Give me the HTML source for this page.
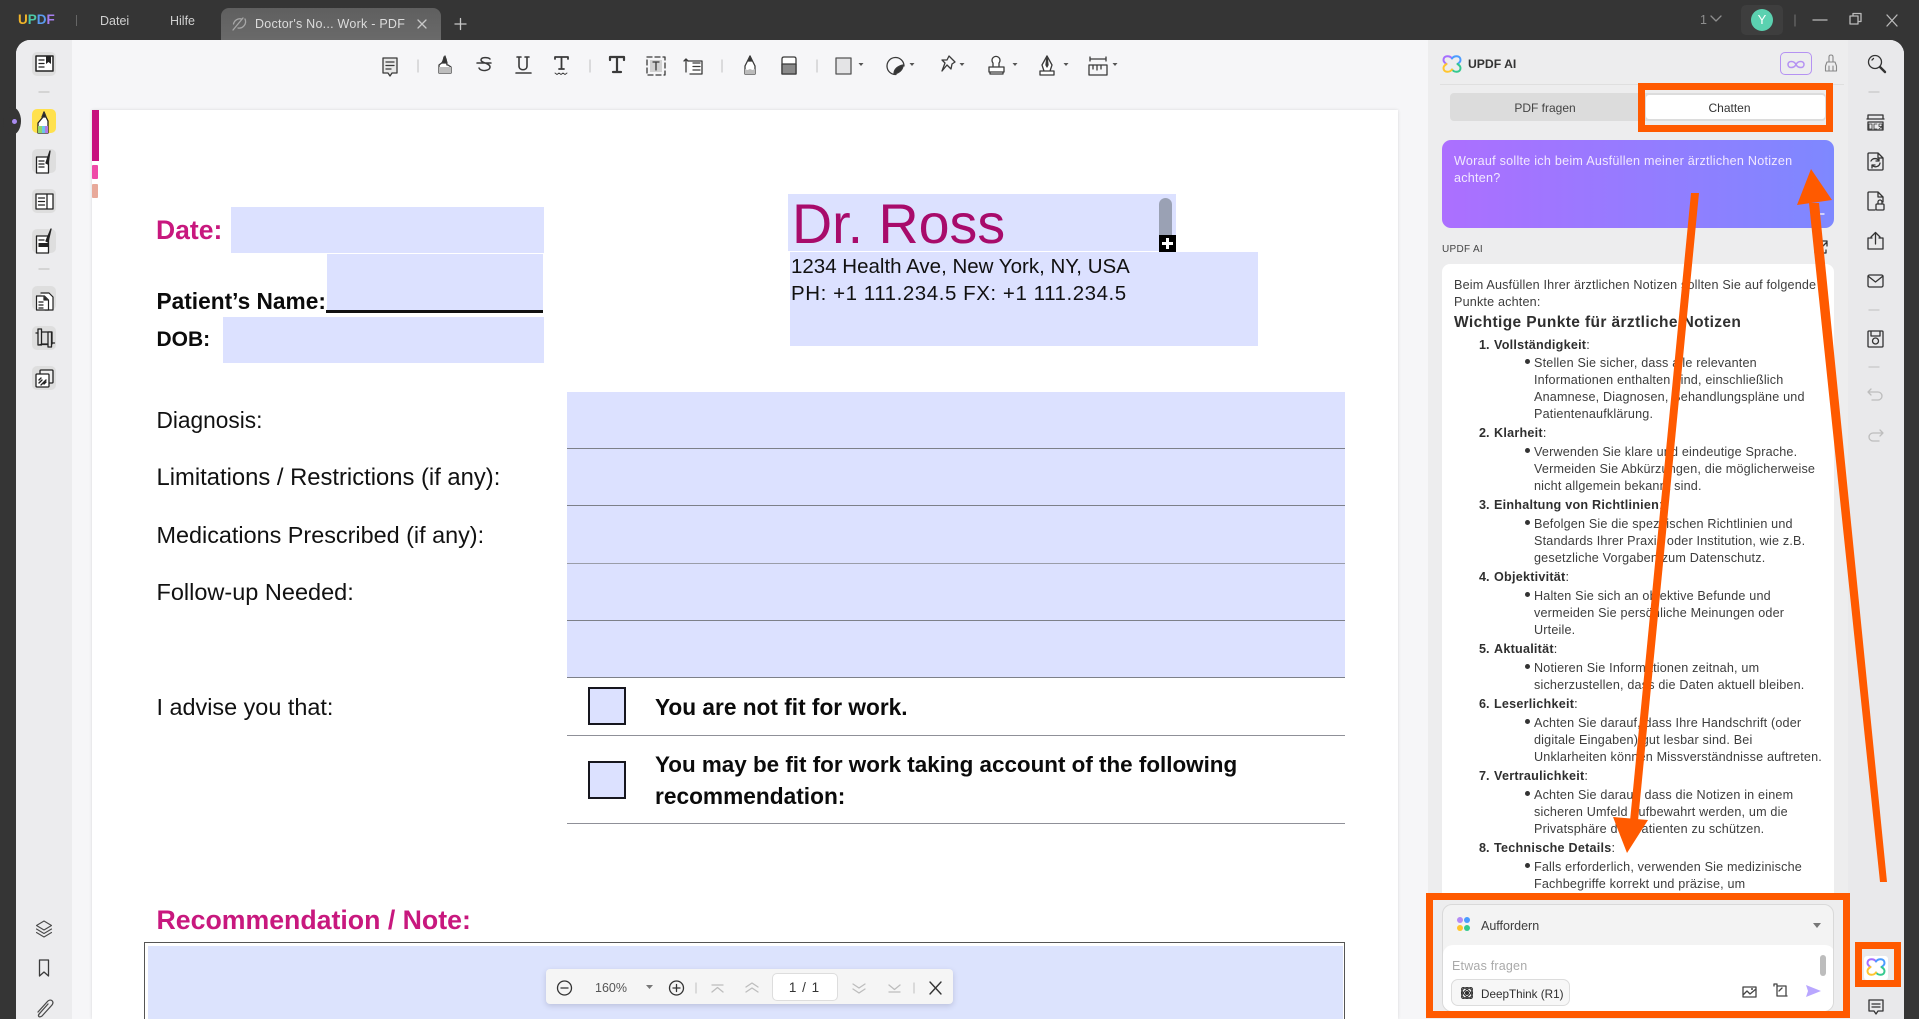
<!DOCTYPE html>
<html lang="de"><head><meta charset="utf-8"><title>UPDF</title>
<style>
html,body{margin:0;padding:0;width:1919px;height:1019px;overflow:hidden;background:#353535;font-family:"Liberation Sans",sans-serif}
div{position:absolute;box-sizing:border-box}
.t{position:absolute;white-space:nowrap;height:18px;line-height:18px}
.f{background:#dce1ff}
.l{position:absolute;left:567px;width:778px;height:1px;background:#7d8089}
.p{font-size:23.5px;color:#111;height:30px;line-height:30px;left:156.500px}
.b{font-size:22.5px;font-weight:bold;color:#0b0b0b;height:30px;line-height:30px}
.a{font-size:12.6px;color:#3d3d3d;letter-spacing:.18px;margin-top:1px}
.h{font-size:12.6px;color:#2f2f2f;font-weight:bold;letter-spacing:.24px;margin-top:1px}
.h span.n{display:inline-block;width:15px;letter-spacing:0}
.d{position:absolute;left:1525px;width:5px;height:5px;border-radius:50%;background:#333;margin-top:1px}
svg{position:absolute;left:0;top:0}
</style></head><body>

<!-- main panel -->
<div style="left:16px;top:40px;width:1888px;height:979px;background:#f6f6f8;border-radius:14px 14px 0 0;overflow:hidden">
 <div style="left:0;top:0;width:56px;height:979px;background:#ececee"></div>
 <div style="left:1412px;top:0;width:420px;height:979px;background:#ededee"></div>
 <div style="left:1832px;top:0;width:56px;height:979px;background:#e9e9eb"></div>
</div>

<!-- handle -->
<div style="left:3px;top:107px;width:18px;height:28px;border-radius:50%;background:#353535"></div>
<div style="left:12px;top:119px;width:5px;height:5px;border-radius:50%;background:#a98bf0"></div>

<!-- page -->
<div style="left:92px;top:110px;width:1306px;height:909px;background:#fff;box-shadow:0 0 3px rgba(0,0,0,.12)"></div>
<div style="left:92px;top:110px;width:7px;height:51px;background:#c8107e"></div>
<div style="left:92px;top:165px;width:6px;height:14px;background:#ef4aa8;border-radius:1px"></div>
<div style="left:92px;top:184px;width:6px;height:14px;background:#e8a99a;border-radius:1px"></div>

<div class="f" style="left:231px;top:207px;width:313px;height:46px"></div>
<div class="f" style="left:327px;top:254px;width:216px;height:56px"></div>
<div style="left:326px;top:310px;width:217px;height:3px;background:#111"></div>
<div class="f" style="left:223px;top:317px;width:321px;height:46px"></div>
<div class="t" style="left:156px;top:215px;height:30px;line-height:30px;font-size:26.500px;font-weight:bold;color:#c8187e">Date:</div>
<div class="t b" style="left:156.500px;top:286px;font-size:22.7px">Patient’s Name:</div>
<div class="t b" style="left:156.500px;top:325px;font-size:21px">DOB:</div>

<div class="f" style="left:788px;top:194px;width:388px;height:57px"></div>
<div class="f" style="left:790px;top:252px;width:468px;height:94px"></div>
<div class="t" style="left:792px;top:191px;height:66px;line-height:66px;font-size:55.600px;color:#a80b6b">Dr. Ross</div>
<div class="t" style="left:791px;top:253px;height:28px;line-height:28px;font-size:20.500px;color:#111">1234 Health Ave, New York, NY, USA</div>
<div class="t" style="left:791px;top:280px;height:28px;line-height:28px;font-size:20.500px;letter-spacing:.55px;color:#111">PH: +1 111.234.5 FX: +1 111.234.5</div>
<div style="left:1159px;top:198px;width:13px;height:40px;background:#9aa1b4;border-radius:7px 7px 0 0"></div>
<div style="left:1159px;top:235px;width:17px;height:17px;background:#000"></div>
<div style="left:1162px;top:242px;width:11px;height:3px;background:#fff"></div>
<div style="left:1166px;top:238px;width:3px;height:11px;background:#fff"></div>

<div class="f" style="left:567px;top:392px;width:778px;height:285px"></div>
<div class="l" style="top:448px"></div><div class="l" style="top:505px"></div><div class="l" style="top:563px;background:#9a9da8"></div><div class="l" style="top:620px"></div><div class="l" style="top:677px"></div><div class="l" style="top:735px;background:#8f9098"></div><div class="l" style="top:823px;background:#8f9098"></div>

<div class="t p" style="top:405px;font-size:22.700px">Diagnosis:</div>
<div class="t p" style="top:463px;font-size:23.800px">Limitations / Restrictions (if any):</div>
<div class="t p" style="top:520px;font-size:23.400px">Medications Prescribed (if any):</div>
<div class="t p" style="top:577px">Follow-up Needed:</div>
<div class="t p" style="top:692px;font-size:23.400px">I advise you that:</div>

<div class="f" style="left:588px;top:687px;width:38px;height:38px;border:2.5px solid #16161e"></div>
<div class="f" style="left:588px;top:761px;width:38px;height:38px;border:2.5px solid #16161e"></div>
<div class="t b" style="left:655px;top:692px;font-size:22.660px">You are not fit for work.</div>
<div class="t b" style="left:655px;top:750px;font-size:22.420px">You may be fit for work taking account of the following</div>
<div class="t b" style="left:655px;top:781px;font-size:22.700px">recommendation:</div>

<div class="t" style="left:156.500px;top:904px;height:32px;line-height:32px;font-size:26.700px;font-weight:bold;color:#c8187e">Recommendation / Note:</div>
<div style="left:144px;top:942px;width:1201px;height:77px;border:1.5px solid #555;border-bottom:0"></div>
<div style="left:148px;top:946px;width:1195px;height:73px;background:#dce3fd"></div>

<!-- zoom bar -->
<div style="left:546px;top:969px;width:407px;height:35px;background:#f5f5f5;border-radius:4px;box-shadow:0 2px 6px rgba(60,60,90,.2)"></div>
<div style="left:772px;top:973px;width:66px;height:28px;background:#fff;border:1px solid #ddd;border-radius:5px"></div>
<div class="t" style="left:595px;top:979px;font-size:12.5px;color:#555">160%</div>
<div class="t" style="left:771px;top:979px;width:66px;text-align:center;font-size:13.500px;color:#333;word-spacing:2px">1 / 1</div>

<!-- title bar -->
<div class="t" style="left:18px;top:11px;font-size:13.5px;font-weight:bold"><span style="color:#f0b429">U</span><span style="color:#4cc9a8">P</span><span style="color:#5a9cf0">D</span><span style="color:#a77ef0">F</span></div>
<div style="left:76px;top:15px;width:1px;height:11px;background:#666"></div>
<div class="t" style="left:100px;top:12px;font-size:12.5px;color:#d0d0d0">Datei</div>
<div class="t" style="left:170px;top:12px;font-size:12.5px;color:#d0d0d0">Hilfe</div>
<div style="left:221px;top:8px;width:220px;height:32px;border-radius:8px 8px 0 0;background:linear-gradient(#5f5f5f,#6a6a6a)"></div>
<div class="t" style="left:255px;top:15px;font-size:12.5px;color:#dcdcdc;letter-spacing:.25px">Doctor's No... Work - PDF</div>
<div class="t" style="left:1700px;top:11px;font-size:12.5px;color:#8e8e8e">1</div>
<div style="left:1741px;top:5px;width:42px;height:30px;background:#3e3e3e;border-radius:5px"></div>
<div style="left:1751px;top:9px;width:22px;height:22px;border-radius:50%;background:#5bd1b0;color:#fff;font-size:13px;line-height:22px;text-align:center">Y</div>

<!-- AI panel -->
<div class="t" style="left:1468px;top:55px;font-size:12.200px;font-weight:bold;color:#333">UPDF AI</div>
<div style="left:1780px;top:52px;width:32px;height:23px;border:1px solid #b592f2;border-radius:5px"></div>
<div style="left:1440px;top:84px;width:404px;height:1px;background:#dfdfdf"></div>
<div style="left:1450px;top:93px;width:376px;height:28px;background:#dcdcdc;border-radius:4px"></div>
<div style="left:1646px;top:95px;width:179px;height:24px;background:#fff;border-radius:3px"></div>
<div class="t" style="left:1450px;top:99px;width:190px;text-align:center;font-size:12px;color:#444">PDF fragen</div>
<div class="t" style="left:1640px;top:99px;width:179px;text-align:center;font-size:12px;color:#333">Chatten</div>
<div style="left:1442px;top:140px;width:392px;height:88px;border-radius:9px;background:linear-gradient(90deg,#ac6fff,#7e88ff)"></div>
<div class="t" style="left:1454px;top:152px;font-size:12.6px;color:#f2e8ff;letter-spacing:.25px">Worauf sollte ich beim Ausfüllen meiner ärztlichen Notizen</div>
<div class="t" style="left:1454px;top:169px;font-size:12.6px;color:#f2e8ff;letter-spacing:.25px">achten?</div>
<div class="t" style="left:1442px;top:241px;font-size:10px;color:#444;letter-spacing:.3px">UPDF AI</div>
<div style="left:1442px;top:264px;width:392px;height:640px;background:#fff;border-radius:8px 8px 0 0"></div>
<div class="t a" style="left:1454px;top:275px">Beim Ausfüllen Ihrer ärztlichen Notizen sollten Sie auf folgende</div>
<div class="t a" style="left:1454px;top:292px">Punkte achten:</div>
<div class="t" style="left:1454px;top:314px;font-size:15.500px;font-weight:bold;color:#2f2f2f;letter-spacing:.39px">Wichtige Punkte für ärztliche Notizen</div>

<div class="t h" style="left:1479px;top:335px"><span class="n">1.</span>Vollständigkeit<span style="font-weight:normal">:</span></div>
<div class="d" style="top:358px"></div>
<div class="t a" style="left:1534px;top:353px">Stellen Sie sicher, dass alle relevanten</div>
<div class="t a" style="left:1534px;top:370px">Informationen enthalten sind, einschließlich</div>
<div class="t a" style="left:1534px;top:387px">Anamnese, Diagnosen, Behandlungspläne und</div>
<div class="t a" style="left:1534px;top:404px">Patientenaufklärung.</div>
<div class="t h" style="left:1479px;top:423px"><span class="n">2.</span>Klarheit<span style="font-weight:normal">:</span></div>
<div class="d" style="top:447px"></div>
<div class="t a" style="left:1534px;top:442px">Verwenden Sie klare und eindeutige Sprache.</div>
<div class="t a" style="left:1534px;top:459px">Vermeiden Sie Abkürzungen, die möglicherweise</div>
<div class="t a" style="left:1534px;top:476px">nicht allgemein bekannt sind.</div>
<div class="t h" style="left:1479px;top:495px"><span class="n">3.</span>Einhaltung von Richtlinien<span style="font-weight:normal">:</span></div>
<div class="d" style="top:519px"></div>
<div class="t a" style="left:1534px;top:514px">Befolgen Sie die spezifischen Richtlinien und</div>
<div class="t a" style="left:1534px;top:531px">Standards Ihrer Praxis oder Institution, wie z.B.</div>
<div class="t a" style="left:1534px;top:548px">gesetzliche Vorgaben zum Datenschutz.</div>
<div class="t h" style="left:1479px;top:567px"><span class="n">4.</span>Objektivität<span style="font-weight:normal">:</span></div>
<div class="d" style="top:591px"></div>
<div class="t a" style="left:1534px;top:586px">Halten Sie sich an objektive Befunde und</div>
<div class="t a" style="left:1534px;top:603px">vermeiden Sie persönliche Meinungen oder</div>
<div class="t a" style="left:1534px;top:620px">Urteile.</div>
<div class="t h" style="left:1479px;top:639px"><span class="n">5.</span>Aktualität<span style="font-weight:normal">:</span></div>
<div class="d" style="top:663px"></div>
<div class="t a" style="left:1534px;top:658px">Notieren Sie Informationen zeitnah, um</div>
<div class="t a" style="left:1534px;top:675px">sicherzustellen, dass die Daten aktuell bleiben.</div>
<div class="t h" style="left:1479px;top:694px"><span class="n">6.</span>Leserlichkeit<span style="font-weight:normal">:</span></div>
<div class="d" style="top:718px"></div>
<div class="t a" style="left:1534px;top:713px">Achten Sie darauf, dass Ihre Handschrift (oder</div>
<div class="t a" style="left:1534px;top:730px">digitale Eingaben) gut lesbar sind. Bei</div>
<div class="t a" style="left:1534px;top:747px">Unklarheiten können Missverständnisse auftreten.</div>
<div class="t h" style="left:1479px;top:766px"><span class="n">7.</span>Vertraulichkeit<span style="font-weight:normal">:</span></div>
<div class="d" style="top:790px"></div>
<div class="t a" style="left:1534px;top:785px">Achten Sie darauf, dass die Notizen in einem</div>
<div class="t a" style="left:1534px;top:802px">sicheren Umfeld aufbewahrt werden, um die</div>
<div class="t a" style="left:1534px;top:819px">Privatsphäre der Patienten zu schützen.</div>
<div class="t h" style="left:1479px;top:838px"><span class="n">8.</span>Technische Details<span style="font-weight:normal">:</span></div>
<div class="d" style="top:862px"></div>
<div class="t a" style="left:1534px;top:857px">Falls erforderlich, verwenden Sie medizinische</div>
<div class="t a" style="left:1534px;top:874px">Fachbegriffe korrekt und präzise, um</div>

<!-- input -->
<div style="left:1426px;top:893px;width:424px;height:126px;background:#ededee"></div>
<div style="left:1442px;top:904px;width:392px;height:108px;background:#f3f3f3;border:1px solid #d9d9d9;border-radius:10px;overflow:hidden">
 <div style="left:0;top:40px;width:392px;height:68px;background:#fff;border-radius:10px 10px 0 0"></div>
</div>
<div class="t" style="left:1481px;top:917px;font-size:12.5px;color:#3d3d3d">Auffordern</div>
<div class="t" style="left:1452px;top:957px;font-size:12.5px;color:#aaa;letter-spacing:.2px">Etwas fragen</div>
<div style="left:1820px;top:955px;width:6px;height:21px;background:#bdbdbd;border-radius:3px"></div>
<div style="left:1451px;top:979px;width:119px;height:27px;background:#f7f7f7;border:1px solid #dcdcdc;border-radius:7px"></div>
<div class="t" style="left:1481px;top:986px;font-size:11.700px;color:#2f2f2f">DeepThink (R1)</div>
<div style="left:1864px;top:956px;width:24px;height:24px;background:#fff;border-radius:3px"></div>

<svg width="1919" height="1019" viewBox="0 0 1919 1019" fill="none" stroke="#333" stroke-width="1.3" stroke-linecap="round" stroke-linejoin="round">
 <!-- title bar icons -->
 <g stroke="#a8a8a8"><path d="M233 30l10-12M233.500 24a6.500 6.500 0 0 1 8-5M245 19a6.500 6.500 0 0 1-7 9"/></g>
 <path d="M418 20l8 8M426 20l-8 8M455 24h11M460.500 18.500v11" stroke="#c8c8c8"/>
 <path d="M1711 16l5 5 5-5" stroke="#8e8e8e"/>
 <path d="M1795 15v11" stroke="#666"/>
 <path d="M1813 20h14" stroke="#bbb"/>
 <path d="M1850 24v-8h8v8h-8M1853 16v-2.500h8v8h-3" stroke="#bbb"/>
 <path d="M1887 15l10 11M1897 15l-10 11" stroke="#bbb"/>

 <!-- toolbar icons -->
 <g stroke="#3a3a3a" transform="translate(0,1)">
  <path d="M383 57h14v15h-5l-2 3-2-3h-5zM386 61h8M386 64.500h8M386 68h5" fill="#e8e8e8"/>
  <path d="M418 59v12" stroke="#ccc"/>
  <path d="M439 72v-8l4-3 1-5 2 2 1 6 1 0 3 2v6z" fill="#fff"/><path d="M439 66h12v6h-12z" fill="#bdbdbd" stroke="none"/><path d="M442 62l3-7 2 7z" fill="#333"/>
  <path d="M477 62h14M490 58c-2-2-9-2-9 1 0 3 9 3 9 7s-9 5-11 1" stroke-width="1.5"/>
  <path d="M519 56v9c0 5 8 5 8 0v-9M517 56h4M525 56h4M516 72h15" stroke-width="1.6"/>
  <path d="M555 58v-2h13v2M561.500 56v12M559 68h5" stroke-width="1.8"/><path d="M555 72l2 1.500 2-1.500 2 1.500 2-1.500 2 1.500 2-1.500" stroke-width=".9"/>
  <path d="M590 59v12" stroke="#ccc"/>
  <path d="M610 59v-3h14v3M617 56v15M613 71h8" stroke-width="2.2"/>
  <path d="M647 56h18v18h-18z" stroke-dasharray="5 3"/><rect x="650" y="59" width="12" height="12" fill="#d2d2d2" stroke="none"/><path d="M653 61h6M656 61v8" stroke-width="1.3"/>
  <path d="M688 60h14v13h-12" fill="#fff"/><path d="M693 62h7M693 65.500h7M693 69h7M686 71v-13M684 60l2-2 2 2"/>
  <path d="M722 59v12" stroke="#ccc"/>
  <path d="M745 73v-8l5-10 5 10v8z" fill="#fff"/><path d="M745 73v-5l2.500 1 2.500-1 2.500 1 2.500-1v5z" fill="#bbb" stroke="none"/><path d="M748 60l2-5 2 5z" fill="#333"/>
  <path d="M782 73v-15q0-2 2-2h10q2 0 2 2v15z" fill="#fff"/><path d="M782 63h14v10h-14z" fill="#8a8a8a"/>
  <path d="M817 59v12" stroke="#ccc"/>
  <rect x="836" y="57" width="15" height="16" fill="#e4e4e6" stroke="#555"/>
  <path d="M904 65a8.500 8.500 0 1 0-8 8.500" /><path d="M894 73c0-5 4-8 9-9 0 5-4 8-9 9z" fill="#333"/>
  <path d="M949 55l6 6-3 2-1 5-4-4-5 6 3-8-3-3 5 0z"/>
  <path d="M993 65v-3a4 4 0 1 1 6 0v3M989 66h15v5h-15zM990 71v2h13v-2" fill="#fff"/>
  <path d="M1040 74h14v-4h-14zM1047 55l-5 9 2 6h6l2-6z" fill="#fff"/><path d="M1047 55l-1 9 1 2 1-2z" fill="#333"/>
  <path d="M1090 58h16M1090 56v4M1106 56v4M1089 64h18v10h-18zM1093 64v4M1097 64v5M1101 64v4" />
 </g>
 <g fill="#555" stroke="none" transform="translate(0,1)">
  <path d="M858.500 62h5l-2.500 3zM909.500 62h5l-2.500 3zM959.500 62h5l-2.500 3zM1012.500 62h5l-2.500 3zM1063.500 62h5l-2.500 3zM1112.500 62h5l-2.500 3z"/>
 </g>

 <!-- left toolbar -->
 <g>
  <rect x="32" y="52" width="24" height="24" rx="5" fill="#dedede" stroke="none"/>
  <rect x="32" y="149" width="24" height="24" rx="5" fill="#dedede" stroke="none"/>
  <rect x="32" y="189" width="24" height="24" rx="5" fill="#dedede" stroke="none"/>
  <rect x="32" y="229" width="24" height="24" rx="5" fill="#dedede" stroke="none"/>
  <rect x="32" y="286" width="24" height="24" rx="5" fill="#dedede" stroke="none"/>
  <rect x="32" y="326" width="24" height="24" rx="5" fill="#dedede" stroke="none"/>
  <rect x="32" y="366" width="24" height="24" rx="5" fill="#dedede" stroke="none"/>
  <rect x="32" y="109" width="24" height="24" rx="5" fill="#ffe14d" stroke="none"/>
  <path d="M39 92h10M39 269h10" stroke="#c5c5c5"/>
  <path d="M36 56h17v15h-17z" fill="#fff" stroke="#222" stroke-width="1.500"/><path d="M39 60h5M39 63.500h5M39 67h5" stroke="#222"/><path d="M46 56h5v8l-2.500-2-2.500 2z" fill="#222" stroke="none"/>
  <path d="M38 133v-10l5-6 1-5 2 5 2 4v12z" fill="#fff" stroke="#222"/><path d="M42 117l2-5 2 5z" fill="#222"/>
  <rect x="38" y="126" width="10" height="7" fill="#6cc6e8" stroke="none"/><rect x="38" y="126" width="4" height="7" fill="#8fd66d" stroke="none"/><rect x="45" y="126" width="3" height="7" fill="#b07ae8" stroke="none"/>
  <path d="M36.500 157h12v16h-12z" fill="#fff" stroke="#222" stroke-width="1.300"/><path d="M39 161h5M39 164h5M39 167h5" stroke="#222"/><path d="M50 151l-2 13-2-1z" fill="#222" stroke="#222"/>
  <path d="M36 194h17v15h-17zM47 194v15" fill="#fff" stroke="#222" stroke-width="1.300"/><path d="M38.500 198h6M38.500 201.500h6M38.500 205h6" stroke="#222"/>
  <path d="M36.500 236h12v17h-12z" fill="#fff" stroke="#222" stroke-width="1.300"/><path d="M39 240h5" stroke="#222"/><rect x="38.500" y="243" width="10" height="4" fill="#222" stroke="none"/><path d="M51 229l-3 13-2-1z" fill="#222" stroke="#222"/>
  <path d="M41 293h8l4 4v13h-8" stroke="#222" stroke-width="1.200" fill="#fff"/><path d="M36.500 296h8l4 4v10h-12z" fill="#fff" stroke="#222" stroke-width="1.200"/><path d="M44 296l4 4h-4z" fill="#222"/><path d="M39 302h4M39 305h4M39 308h4" stroke="#222"/>
  <path d="M40 332h12v12h-12z" stroke="#222" stroke-width="1.300"/><rect x="38" y="329" width="3.500" height="16" fill="#e4e4e4" stroke="#222"/><rect x="48" y="332" width="3.500" height="15" fill="#e4e4e4" stroke="#222"/><path d="M36 333h2M52 343h2.500M40 344.500h8" stroke="#222"/>
  <rect x="40" y="370" width="13" height="13" rx="1" fill="#eee" stroke="#222"/><rect x="36" y="374" width="13" height="13" rx="1" fill="#fff" stroke="#222"/><path d="M39 383l3-3M41 385l5-5M44 384l2-2M39 380l2-2" stroke="#222" stroke-width="1.400"/>
  <!-- bottom -->
  <path d="M44 921l7.500 4.500-7.500 4.500-7.500-4.500zM36.500 929l7.500 4.500 7.500-4.500M36.500 932.500l7.500 4.500 7.500-4.500" stroke="#4a4a4a" stroke-width="1.100"/>
  <path d="M39.500 960h9v16l-4.500-4-4.500 4z" stroke="#3a3a3a"/>
  <path d="M49 1006l-8 9c-3 3-1 5 2 3l10-11c3-4-2-7-5-3l-9 10" stroke="#4a4a4a" transform="translate(-1,-2)"/>
 </g>

 <!-- zoom bar icons -->
 <g stroke="#333">
  <circle cx="564.500" cy="988" r="7"/><path d="M561 988h7"/>
  <circle cx="676.500" cy="988" r="7"/><path d="M673 988h7M676.500 984.500v7"/>
  <path d="M646 985h7l-3.500 4z" fill="#777" stroke="none"/>
  <path d="M696 983v10M914 983v10" stroke="#ccc"/>
  <path d="M712 985h11M712 992l5.500-4.500 5.500 4.500M746 987l6-4 6 4M746 992l6-4 6 4M853 984l6 4 6-4M853 989l6 4 6-4M889 985l5.500 4.500 5.500-4.500M889 992h11" stroke="#bdbdbd"/>
  <path d="M930 982l11 12M941 982l-11 12" stroke-width="1.400"/>
 </g>

 <!-- AI panel icons -->
 <g stroke-width="2">
  <g transform="translate(1452,64)"><path d="M0-5.500C-2-8.500-8.500-9-8.500-4-8.500-2-7-1-5.500 0" stroke="#a56eff"/><path d="M0-5.500C2-8.500 8.500-9 8.500-4 8.500-2 7-1 5.500 0" stroke="#4a9cff"/><path d="M5.500 0C7 1 8.500 2 8.500 4 8.500 9 2 8.500 0 5.500" stroke="#35c98f"/><path d="M0 5.500C-2 8.500-8.500 9-8.500 4-8.500 2-7 1-5.500 0" stroke="#ffc52e"/></g>
  <g transform="translate(1876,967)"><path d="M0-5.500C-2-8.500-8.500-9-8.500-4-8.500-2-7-1-5.500 0" stroke="#a56eff"/><path d="M0-5.500C2-8.500 8.500-9 8.500-4 8.500-2 7-1 5.500 0" stroke="#4a9cff"/><path d="M5.500 0C7 1 8.500 2 8.500 4 8.500 9 2 8.500 0 5.500" stroke="#35c98f"/><path d="M0 5.500C-2 8.500-8.500 9-8.500 4-8.500 2-7 1-5.500 0" stroke="#ffc52e"/></g>
 </g>
 <path d="M1796 64.500c-2-4-8-4-8 0s6 4 8 0c2-4 8-4 8 0s-6 4-8 0z" stroke="#b592f2" stroke-width="1.500"/>
 <path d="M1829 62v-5q0-2 2-2t2 2v5M1827 62h8l1.500 4v5h-11v-5zM1829 66v5M1833 66v5" stroke="#888" stroke-width="1.100"/>
 <path d="M1819 244h-4v9h11v-3M1820 249l7-7M1822 241h5v5" stroke="#333"/>
 <path d="M1811 210l7-5M1811 214h13" stroke="#fff"/>

 <circle cx="1460" cy="920" r="3" fill="#b48bf5" stroke="none"/><circle cx="1467" cy="920" r="3" fill="#4a9cff" stroke="none"/><circle cx="1460" cy="928" r="3" fill="#ffc52e" stroke="none"/><circle cx="1467" cy="928" r="3" fill="#35c98f" stroke="none"/>
 <path d="M1813 923h8l-4 5z" fill="#777" stroke="none"/>
 <g transform="translate(1467,993)" stroke="#333" stroke-width="1.100"><ellipse rx="7" ry="3" transform="rotate(45)"/><ellipse rx="7" ry="3" transform="rotate(-45)"/><circle r="5.500"/><circle r="1.500" fill="#333"/></g>
 <path d="M1743 987h13v10h-13zM1743 995l4-4 3 3 6-5" stroke="#444"/><circle cx="1752" cy="989" r="1" fill="#444" stroke="none"/>
 <path d="M1774 984h3v12h10M1777 986h9v9M1774 986v-2M1779 991l3-3" stroke="#444"/>
 <path d="M1806 985l15 6-15 6 2-6z" fill="#b9a7ff" stroke="none"/>

 <!-- right strip -->
 <g stroke="#333">
  <circle cx="1875" cy="62" r="6.500"/><path d="M1880 67l5 5" stroke-width="2.400"/><path d="M1872 60l1.500-1.500"/>
  <path d="M1869 92h10M1869 310h10M1869 367h10" stroke="#c8c8c8"/>
  <path d="M1868 119v-4h15v4M1867 119h17M1868 122h15v8h-15z"/><path d="M1869 124h3v5h-3zM1877 124h-3v5h3M1882 129v-5h-3v2.500h3l-3 2.500" stroke-width=".8"/>
  <path d="M1869 153h9l5 5v11q0 1-1 1h-13q-1 0-1-1v-15q0-1 1-1zM1878 153v5h5"/><path d="M1871 161a4.500 4.500 0 0 1 8 0M1880 163a4.500 4.500 0 0 1-8 2M1879 158v3h-3M1872 168v-3h3"/>
  <path d="M1875 210h-6q-1 0-1-1v-16q0-1 1-1h9l5 5v5M1878 192v5h5"/><rect x="1876" y="204" width="8" height="6" rx="1"/><path d="M1878 204v-2a2 2 0 0 1 4 0v2"/>
  <path d="M1872 238h-4v11h15v-11h-4M1875.500 244v-11M1871 237l4.500-4.500 4.500 4.500"/>
  <rect x="1868" y="275" width="15" height="12" rx="1.500"/><path d="M1868 276l7.500 6 7.500-6"/>
  <path d="M1869 331h13q1 0 1 1v14q0 1-1 1h-13q-1 0-1-1v-14q0-1 1-1zM1871 331v5h9v-5"/><circle cx="1875.500" cy="341" r="3"/>
  <path d="M1871 389l-3 3 3 3M1868 392h10a4 4 0 0 1 0 8h-6M1880 430l3 3-3 3M1883 433h-10a4 4 0 0 0 0 8h6" stroke="#bdbdbd"/>
  <path d="M1869 1000h14v11h-5l-2 3-2-3h-5zM1872 1004h8M1872 1007h8" stroke="#333"/>
 </g>

 <!-- orange annotations -->
 <g fill="none" stroke="#ff5a00" stroke-width="7" stroke-linejoin="miter" stroke-linecap="butt">
  <rect x="1641.500" y="86.500" width="188" height="42"/>
  <rect x="1429.500" y="896.500" width="417" height="118"/>
  <rect x="1858.500" y="945.500" width="39" height="38"/>
 </g>
 <g fill="#ff5a00" stroke="none">
  <path d="M1691 193h8l-61 628h-8z"/>
  <path d="M1613 817l35 3-21 33z"/>
  <path d="M1809 203h10l68 679h-7z"/>
  <path d="M1811 169l21 31-35 5z"/>
 </g>
</svg>
</body></html>
